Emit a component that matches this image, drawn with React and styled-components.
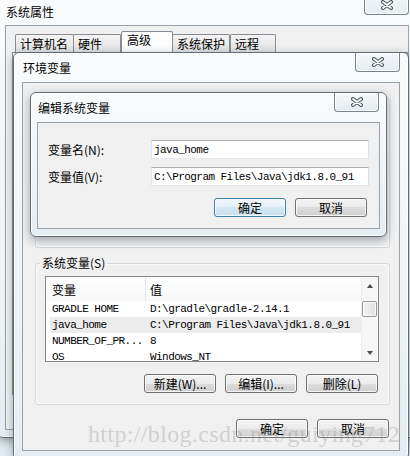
import React from "react";
import styled, { createGlobalStyle } from "styled-components";

const GlobalStyle = createGlobalStyle`
  html, body {
    margin: 0;
    padding: 0;
  }
  body {
    width: 410px;
    height: 456px;
    overflow: hidden;
    font-family: "Noto Sans CJK SC", "Liberation Sans", sans-serif;
    font-size: 12px;
    color: #000;
  }
`;

const Desktop = styled.div`
  position: relative;
  width: 410px;
  height: 456px;
  overflow: hidden;
  background: linear-gradient(90deg, #e3ebf3 0%, #f6f8fa 30%, #f4f6f8 100%);
`;

// aero window, placed on the desktop
const Frame = styled.div`
  position: absolute;
  left: ${(p) => p.$x}px;
  top: ${(p) => p.$y}px;
  width: ${(p) => p.$w}px;
  height: ${(p) => p.$h}px;
  box-sizing: border-box;
  display: flex;
  flex-direction: column;
  padding: 0 ${(p) => p.$edge}px ${(p) => p.$bottom}px;
  border: 1px solid #626c76;
  border-radius: 6px;
  background: linear-gradient(180deg, #f9fbfc 0%, #eff4f7 55%, #e5edf2 100%);
  box-shadow: 0 3px 10px rgba(20, 30, 45, 0.38),
    inset 0 0 0 1px rgba(255, 255, 255, 0.85);
`;

const TitleBar = styled.div`
  flex: none;
  height: 29px;
  display: flex;
  justify-content: space-between;
  align-items: flex-start;
`;

const Title = styled.span`
  align-self: center;
  padding: ${(p) => p.$pt || 0}px 0 0 1px;
  font-size: 12px;
  line-height: 14px;
  color: #000;
  text-shadow: 0 0 6px #fff, 0 0 3px #fff;
`;

const CloseBtn = styled.div`
  flex: none;
  box-sizing: border-box;
  width: 45px;
  height: 19px;
  margin-right: ${(p) => p.$mr || 0}px;
  display: flex;
  align-items: center;
  justify-content: center;
  border: 1px solid #7a848f;
  border-top: none;
  border-radius: 0 0 4px 4px;
  background: linear-gradient(#f6f8fa, #e4ebf0);
  box-shadow: inset 0 0 0 1px rgba(255, 255, 255, 0.75);
`;

const Client = styled.div`
  flex: 1;
  min-height: 0;
  box-sizing: border-box;
  display: flex;
  flex-direction: column;
  padding: ${(p) => p.$pad || "0"};
  background: #f0f0f0;
  border: 1px solid #9aa3ab;
  overflow: hidden;
`;

const TabStrip = styled.div`
  flex: none;
  height: 26px;
  display: flex;
  align-items: flex-end;
  padding-left: 9px;
`;

const Tab = styled.div`
  box-sizing: border-box;
  width: ${(p) => p.$w}px;
  height: ${(p) => (p.$active ? 21 : 18)}px;
  margin-left: ${(p) => p.$ml || 0}px;
  padding: ${(p) => (p.$active ? "1px 0 0 5px" : "2px 0 0 4px")};
  border: 1px solid #898c95;
  border-bottom: none;
  border-radius: 2px 2px 0 0;
  background: ${(p) =>
    p.$active ? "#fcfcfc" : "linear-gradient(#f4f4f4, #e1e1e1)"};
  font-size: 12px;
  line-height: 14px;
  white-space: nowrap;
`;

const TabPanel = styled.div`
  flex: none;
  height: 341px;
  margin-left: 6px;
  background: #fbfbfb;
  border: 1px solid #898c95;
`;

// user variables box, only its lower edge shows below the edit dialog
const HiddenGroup = styled.div`
  flex: none;
  box-sizing: border-box;
  height: 150px;
  margin-top: 10px;
  border: 1px solid #d5d9de;
  border-radius: 3px;
  box-shadow: inset 0 0 0 1px #fafafa;
`;

const Group = styled.fieldset`
  margin: ${(p) => p.$mt || 0}px 0 0;
  padding: 6px 10px ${(p) => p.$pb}px 9px;
  min-inline-size: 0;
  border: 1px solid #d5d9de;
  border-radius: 3px;
  box-shadow: inset 0 0 0 1px #fafafa;
  display: flex;
  flex-direction: column;
`;

const Legend = styled.legend`
  margin-left: -5px;
  padding: 0 2px;
  font-size: 12px;
  line-height: 14px;
`;

const ListView = styled.div`
  flex: none;
  box-sizing: border-box;
  height: ${(p) => p.$h}px;
  display: flex;
  border: 1px solid #828790;
  background: #fff;
  overflow: hidden;
`;

const ListBody = styled.div`
  flex: 1;
  min-width: 0;
  display: flex;
  flex-direction: column;
`;

const Header = styled.div`
  flex: none;
  height: 24px;
  display: flex;
  align-items: center;
  background: linear-gradient(#ffffff, #f8f9fa);
`;

const HeadCell = styled.div`
  width: ${(p) => (p.$first ? "93px" : "auto")};
  flex: ${(p) => (p.$first ? "none" : "1")};
  height: 24px;
  line-height: 25px;
  padding-left: ${(p) => (p.$first ? 6 : 4)}px;
  border-right: ${(p) => (p.$first ? "1px solid #e3e5e8" : "none")};
  font-size: 12px;
`;

const Row = styled.div`
  flex: none;
  height: 16px;
  margin-left: 4px;
  display: flex;
  align-items: center;
  background: ${(p) => (p.$selected ? "#ececec" : "transparent")};
  font-family: "Liberation Mono", monospace;
  font-size: 11px;
  letter-spacing: -0.55px;
  white-space: nowrap;
`;

const NameCell = styled.span`
  flex: none;
  width: 98px;
  padding-left: 2px;
  overflow: hidden;
`;

const ScrollBar = styled.div`
  flex: none;
  width: 16px;
  display: flex;
  flex-direction: column;
  background: #f6f6f6;
  border-left: 1px solid #ececec;
`;

const ArrowBtn = styled.div`
  flex: none;
  height: 17px;
  display: flex;
  align-items: center;
  justify-content: center;
  &::before {
    content: "";
    border-left: 3.5px solid transparent;
    border-right: 3.5px solid transparent;
    ${(p) =>
      p.$down
        ? "border-top: 4px solid #4a4a4a;"
        : "border-bottom: 4px solid #4a4a4a;"}
  }
`;

const Track = styled.div`
  flex: 1;
  padding-top: 7px;
`;

const Thumb = styled.div`
  box-sizing: border-box;
  height: 16px;
  margin-right: 1px;
  border: 1px solid #979797;
  border-radius: 2px;
  background: linear-gradient(90deg, #f5f5f5, #e0e0e0);
  box-shadow: inset 0 0 0 1px rgba(255, 255, 255, 0.8);
`;

const ButtonRow = styled.div`
  flex: none;
  display: flex;
  justify-content: flex-end;
  gap: ${(p) => p.$gap || 9}px;
  margin-top: ${(p) => p.$mt || 0}px;
  padding-right: ${(p) => p.$pr || 0}px;
`;

const Button = styled.div`
  box-sizing: border-box;
  width: 72px;
  height: 19px;
  display: flex;
  align-items: center;
  justify-content: center;
  border: 1px solid ${(p) => (p.$default ? "#3c7fb1" : "#707070")};
  border-radius: 3px;
  background: ${(p) =>
    p.$default
      ? "linear-gradient(#f1f8fd 0%, #e3f0f9 50%, #d3e7f5 50%, #c9e0f1 100%)"
      : "linear-gradient(#f3f3f3 0%, #ebebeb 50%, #dddddd 50%, #d0d0d0 100%)"};
  box-shadow: inset 0 0 0 1px rgba(255, 255, 255, 0.75);
  font-size: 12px;
  line-height: 14px;
  white-space: nowrap;
`;

const Form = styled.div`
  display: grid;
  grid-template-columns: 103px 218px;
  row-gap: 8px;
  align-items: center;
`;

const Label = styled.span`
  font-size: 12px;
  line-height: 14px;
`;

const TextBox = styled.div`
  box-sizing: border-box;
  height: 19px;
  padding-left: 2px;
  display: flex;
  align-items: center;
  background: #fff;
  border: 1px solid;
  border-color: #abadb3 #dbdfe6 #e3e9ef #e2e3ea;
  font-family: "Liberation Mono", monospace;
  font-size: 11px;
  letter-spacing: -0.55px;
  white-space: nowrap;
`;

const Watermark = styled.div`
  position: absolute;
  left: 88px;
  top: 422px;
  font-family: "Liberation Serif", serif;
  font-size: 24px;
  line-height: 24px;
  letter-spacing: 0.35px;
  color: rgba(140, 140, 140, 0.33);
  pointer-events: none;
  white-space: nowrap;
`;

function CloseGlyph() {
  return (
    <svg width="12" height="10" viewBox="0 0 12 10">
      <path d="M2 2 L10 8 M10 2 L2 8" stroke="#4e5966" strokeWidth="4" strokeLinecap="round" />
      <path d="M2 2 L10 8 M10 2 L2 8" stroke="#fff" strokeWidth="1.8" strokeLinecap="round" />
    </svg>
  );
}

function VarList({ height, rows }) {
  return (
    <ListView $h={height}>
      <ListBody>
        <Header>
          <HeadCell $first>变量</HeadCell>
          <HeadCell>值</HeadCell>
        </Header>
        {rows.map((r) => (
          <Row key={r.name} $selected={r.selected}>
            <NameCell>{r.name}</NameCell>
            <span>{r.value}</span>
          </Row>
        ))}
      </ListBody>
      <ScrollBar>
        <ArrowBtn />
        <Track>
          <Thumb />
        </Track>
        <ArrowBtn $down />
      </ScrollBar>
    </ListView>
  );
}

const systemRows = [
  { name: "GRADLE HOME", value: "D:\\gradle\\gradle-2.14.1" },
  { name: "java_home", value: "C:\\Program Files\\Java\\jdk1.8.0_91", selected: true },
  { name: "NUMBER_OF_PR...", value: "8" },
  { name: "OS", value: "Windows_NT" },
];

export default function App() {
  return (
    <>
      <GlobalStyle />
      <Desktop>
        {/* 系统属性 */}
        <Frame $x={-3} $y={-5} $w={420} $h={443} $edge={7} $bottom={7}>
          <TitleBar>
            <Title $pt={2}>系统属性</Title>
            <CloseBtn>
              <CloseGlyph />
            </CloseBtn>
          </TitleBar>
          <Client>
            <TabStrip>
              <Tab $w={59}>计算机名</Tab>
              <Tab $w={48} $ml={-1}>硬件</Tab>
              <Tab $w={52} $active>高级</Tab>
              <Tab $w={58} $ml={-1}>系统保护</Tab>
              <Tab $w={46}>远程</Tab>
            </TabStrip>
            <TabPanel />
          </Client>
        </Frame>

        {/* 环境变量 */}
        <Frame $x={13} $y={52} $w={396} $h={408} $edge={8} $bottom={8}>
          <TitleBar>
            <Title>环境变量</Title>
            <CloseBtn>
              <CloseGlyph />
            </CloseBtn>
          </TitleBar>
          <Client $pad="5px 9px 0 12px">
            <HiddenGroup />
            <Group $mt={8} $pb={11}>
              <Legend>系统变量(S)</Legend>
              <VarList height={86} rows={systemRows} />
              <ButtonRow $mt={12} $pr={1}>
                <Button>新建(W)...</Button>
                <Button>编辑(I)...</Button>
                <Button>删除(L)</Button>
              </ButtonRow>
            </Group>
            <ButtonRow $mt={14} $pr={1}>
              <Button>确定</Button>
              <Button>取消</Button>
            </ButtonRow>
          </Client>
        </Frame>

        {/* 编辑系统变量 */}
        <Frame $x={30} $y={92} $w={357} $h={145} $edge={6} $bottom={7}>
          <TitleBar>
            <Title>编辑系统变量</Title>
            <CloseBtn $mr={1}>
              <CloseGlyph />
            </CloseBtn>
          </TitleBar>
          <Client $pad="17px 10px 0 10px">
            <Form>
              <Label>变量名(N):</Label>
              <TextBox>java_home</TextBox>
              <Label>变量值(V):</Label>
              <TextBox>C:\Program Files\Java\jdk1.8.0_91</TextBox>
            </Form>
            <ButtonRow $mt={12} $pr={2}>
              <Button $default>确定</Button>
              <Button>取消</Button>
            </ButtonRow>
          </Client>
        </Frame>

        <Watermark>http://blog.csdn.net/guiying712</Watermark>
      </Desktop>
    </>
  );
}
